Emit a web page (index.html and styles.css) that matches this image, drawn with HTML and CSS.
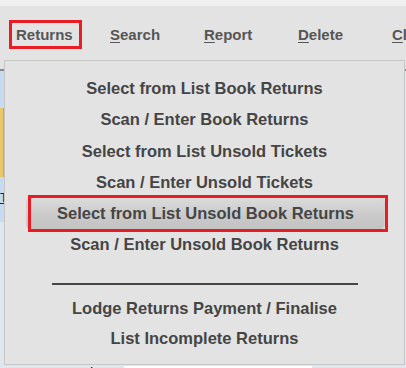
FILE: index.html
```html
<!DOCTYPE html>
<html lang="en">
<head>
<meta charset="utf-8">
<title>Returns</title>
<link rel="stylesheet" href="styles.css">
</head>
<body>
<div class="topstrip"></div>
<nav class="menubar">
  <div class="nav-item"><span class="nav-current">Returns</span></div>
  <div class="nav-item"><u>S</u>earch</div>
  <div class="nav-item"><u>R</u>eport</div>
  <div class="nav-item"><u>D</u>elete</div>
  <div class="nav-item"><u>C</u>l</div>
</nav>
<div class="rule"></div>
<main class="page">
  <aside class="side">
    <div class="side-img"></div>
    <div class="side-link">Tickets</div>
  </aside>
  <section class="content"></section>
</main>
<div class="form-row">
  <span class="form-label">Record No</span>
  <span class="form-input"></span>
  <span class="form-label">Amount</span>
</div>

<div class="dropdown">
  <div class="dd-item">Select from List Book Returns</div>
  <div class="dd-item">Scan / Enter Book Returns</div>
  <div class="dd-item">Select from List Unsold Tickets</div>
  <div class="dd-item">Scan / Enter Unsold Tickets</div>
  <div class="dd-item dd-active"><span class="dd-mark"></span>Select from List Unsold Book Returns</div>
  <div class="dd-item">Scan / Enter Unsold Book Returns</div>
  <div class="dd-sep"></div>
  <div class="dd-item dd-short">Lodge Returns Payment / Finalise</div>
  <div class="dd-item dd-short">List Incomplete Returns</div>
</div>
</body>
</html>
```

FILE: styles.css
```css
* { box-sizing: border-box; }
html, body { margin: 0; padding: 0; }
body {
  width: 406px;
  height: 368px;
  overflow: hidden;
  background: #dfe6ee;
  font-family: "Liberation Sans", Arial, sans-serif;
  position: relative;
}
.topstrip { height: 6px; background: #f0f0f0; }
.menubar {
  display: flex;
  height: 63px;
  padding: 14px 0 0 9px;
  background: #e3e3e3;
  overflow: hidden;
  white-space: nowrap;
}
.nav-item {
  flex: 0 0 94px;
  padding: 3px 0 0 7px;
  font-weight: bold;
  font-size: 15px;
  line-height: 23px;
  height: 29px;
  color: #565656;
}
.nav-item u { text-underline-offset: 2px; }
.nav-item:first-child { padding: 0; }
.nav-current {
  display: inline-block;
  border: 3px solid #e81c24;
  padding: 0 7px 0 4px;
  line-height: 23px;
  width: 73px;
}
.rule { height: 2px; background: #8a8a8a; }
.page { display: flex; height: 151px; }
.side {
  width: 130px;
  background: #c6dbf0;
  padding-top: 37px;
}
.side-img {
  height: 69px;
  background: repeating-linear-gradient(90deg, #e9c66a 0 3px, #d9a646 3px 5px, #f0dc9a 5px 7px);
}
.side-link {
  margin-top: 16px;
  font-size: 12px;
  line-height: 10px;
  color: #1b1f5c;
  text-decoration: underline;
}
.content { flex: 1; }
.form-row {
  display: flex;
  align-items: flex-start;
  gap: 12px;
  margin-top: 143px;
  padding-left: 45px;
  height: 20px;
  overflow: hidden;
}
.form-label { font-size: 15px; line-height: 15px; color: #222; width: 67px; white-space: nowrap; }
.form-input { width: 188px; height: 20px; background: #fff; margin-top: 1px; }

.dropdown {
  position: absolute;
  left: 4px;
  top: 60px;
  width: 401px;
  height: 305px;
  border: 1px solid #c6c6c6;
  background: #e3e3e3;
  padding-top: 12px;
}
.dd-item {
  height: 31.4px;
  line-height: 31.4px;
  text-align: center;
  font-weight: bold;
  font-size: 16.5px;
  color: #454545;
  white-space: nowrap;
}
.dd-active {
  position: relative;
  margin: -2px 19px 0 21px;
  height: 33px;
  line-height: 33px;
  border-radius: 6px;
  background: linear-gradient(#dcdcdc, #c9c9c9 60%, #c2c2c2);
  box-shadow: inset 0 0 0 1px #cfcfcf;
}
.dd-active + .dd-item { margin-top: -0.4px; }
.dd-mark {
  position: absolute;
  left: 2px;
  top: -2px;
  width: 360px;
  height: 37px;
  border: 3px solid #e81c24;
}
.dd-sep {
  width: 306px;
  height: 2px;
  margin: 22px auto 8px;
  background: #464646;
}
.dd-short { height: 30.5px; line-height: 30.5px; }
```
